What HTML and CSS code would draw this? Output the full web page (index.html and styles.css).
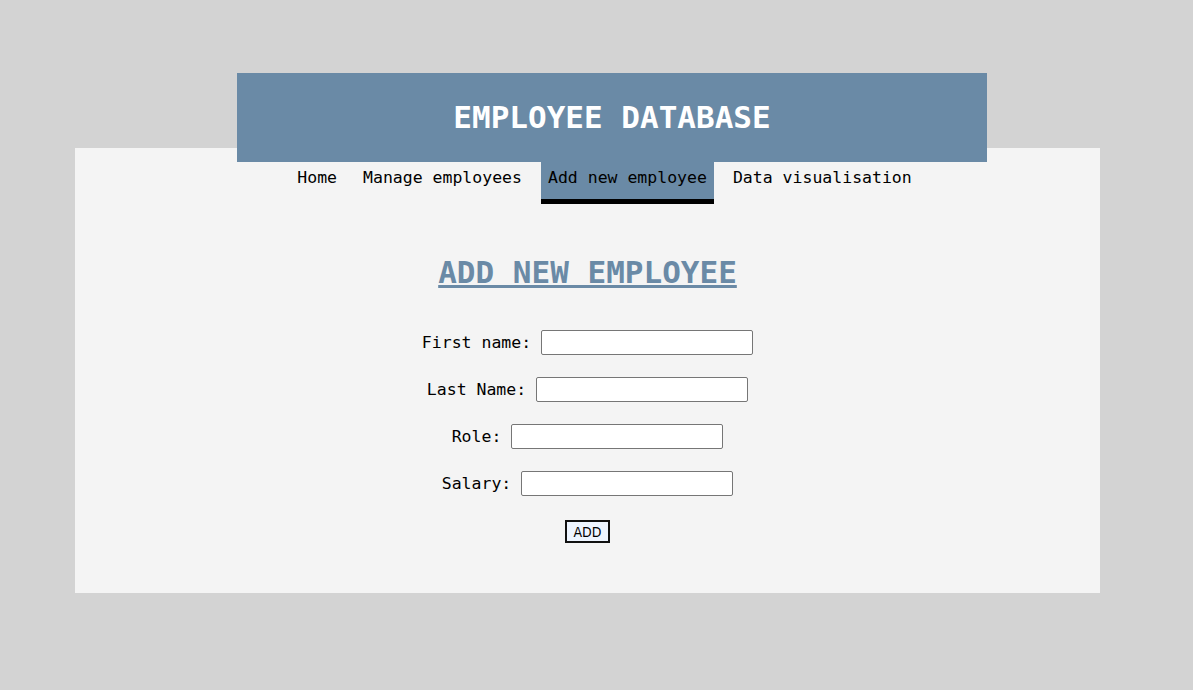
FILE: index.html
```html
<!DOCTYPE html>
<html lang="en">
<head>
<meta charset="utf-8">
<title>Employee Database</title>
<link rel="stylesheet" href="styles.css">
</head>
<body>
<div class="page">
  <header class="header">
    <h1 class="title">EMPLOYEE DATABASE</h1>
  </header>
  <main class="card">
    <nav class="nav">
      <a class="nav-item" href="#">Home</a>
      <a class="nav-item" href="#">Manage employees</a>
      <a class="nav-item active" href="#">Add new employee</a>
      <a class="nav-item" href="#">Data visualisation</a>
    </nav>
    <h2 class="heading">ADD NEW EMPLOYEE</h2>
    <form class="form">
      <div class="row"><label for="fn">First name:</label><input id="fn" type="text"></div>
      <div class="row"><label for="ln">Last Name:</label><input id="ln" type="text"></div>
      <div class="row"><label for="role">Role:</label><input id="role" type="text"></div>
      <div class="row"><label for="sal">Salary:</label><input id="sal" type="text"></div>
      <div class="row"><button type="button" class="btn">ADD</button></div>
    </form>
  </main>
</div>
</body>
</html>
```
FILE: styles.css
```css
html, body {
  margin: 0;
  padding: 0;
}
body {
  background: #d3d3d3;
  font-family: "DejaVu Sans Mono", "Liberation Mono", monospace;
  color: #000;
}
.page {
  padding-top: 73px;
}
.header {
  position: relative;
  z-index: 1;
  width: 750px;
  height: 89px;
  margin-left: 237px;
  margin-bottom: -14px;
  background: #6a8aa6;
  display: flex;
  align-items: center;
  justify-content: center;
}
.title {
  margin: 0;
  color: #fff;
  font-size: 31px;
  font-weight: bold;
  line-height: 1;
}
.card {
  width: 1025px;
  height: 445px;
  margin-left: 75px;
  background: #f4f4f4;
  padding-top: 14px;
  box-sizing: border-box;
}
.nav {
  display: flex;
  justify-content: center;
  gap: 12px;
  padding-left: 34px;
}
.nav-item {
  display: block;
  padding: 6px 7px 12px;
  font-size: 16.5px;
  color: #000;
  text-decoration: none;
  border-bottom: 5px solid transparent;
}
.nav-item.active {
  background: #6a8aa6;
  border-bottom-color: #000;
}
.heading {
  margin: 50px 0 0;
  text-align: center;
  font-size: 31px;
  font-weight: bold;
  color: #6a8aa6;
  text-decoration: underline;
  text-decoration-thickness: 3px;
}
.form {
  margin-top: 40px;
  display: flex;
  flex-direction: column;
  align-items: center;
  gap: 22px;
}
.row {
  display: flex;
  align-items: center;
  gap: 11px;
}
.row label {
  font-size: 16.5px;
  line-height: 19px;
  position: relative;
  top: 0;
}
.row input {
  width: 212px;
  height: 25px;
  box-sizing: border-box;
  border: 1px solid #767676;
  border-radius: 2px;
  background: #fff;
  margin: 0 0 0 -1px;
}
.btn {
  margin-top: 2px;
  height: 23px;
  padding: 0 6px;
  border: 2px solid #111;
  background: #eef5ff;
  font-family: "DejaVu Sans Condensed", "DejaVu Sans", sans-serif;
  font-size: 14px;
  font-weight: normal;
  color: #000;
}
```
